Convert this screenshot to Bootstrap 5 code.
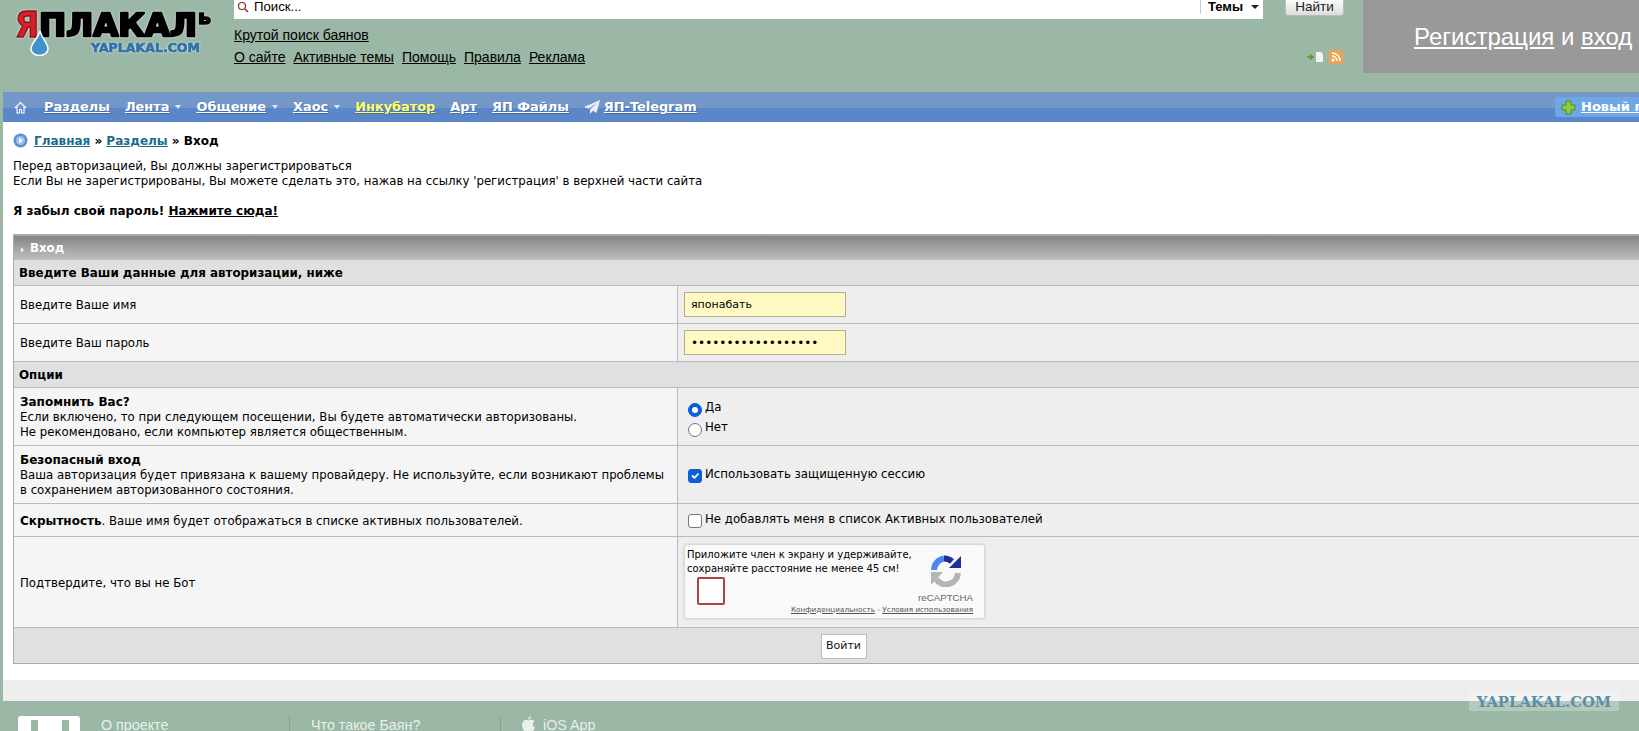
<!DOCTYPE html>
<html lang="ru">
<head>
    <meta charset="UTF-8">
    <meta name="viewport" content="width=device-width, initial-scale=1.0">
    <title>Вход</title>
    <link href="https://cdn.jsdelivr.net/npm/bootstrap@5.3.0/dist/css/bootstrap.min.css" rel="stylesheet">
    <style>
        html, body { height: 731px; overflow: hidden; background: #9bb7a5; }
        body { font-family: "DejaVu Sans", sans-serif; font-size: 11.75px; color: #000; }
        .yp-page { width: 1683px; position: relative; height: 731px; }
        a { color: inherit; }

        /* шапка */
        .yp-top { height: 92px; }
        .yp-logo { width: 234px; flex: none; }
        .yp-logo svg { display: block; }
        .yp-logo-t { filter: drop-shadow(0 0 1px #eee); }
        .yp-search-col { width: 1110px; flex: none; font-family: "Liberation Sans", sans-serif; font-size: 14px; }
        .yp-search { width: 1029px; height: 19px; background: #fff; padding-left: 2px; line-height: 13px; padding-bottom: 6px; }
        .yp-search-text { font-size: 13.2px; margin-left: 4px; }
        .yp-search-sel { width: 63px; height: 14px; border-left: 1px solid #ccc; margin-left: auto; padding-left: 7px; font-weight: bold; font-size: 13px; }
        .yp-caret { width: 0; height: 0; border-left: 4px solid transparent; border-right: 4px solid transparent; border-top: 4px solid #222; }
        .yp-find { width: 59px; height: 16px; margin-left: 22px; line-height: 9px; padding: 0 0 3px; border: 1px solid #bbb; border-top: 0; border-radius: 0 0 3px 3px; background: linear-gradient(#fafafa, #ddd); font-size: 13.5px; color: #222; }
        .yp-links-big { margin-top: 8px; line-height: 16px; }
        .yp-links { margin-top: 6px; line-height: 16px; gap: 8px; white-space: nowrap; }
        .yp-rss { margin-left: auto; padding-right: 1px; gap: 5px; }
        .yp-reg { width: 320px; height: 73px; margin-left: 19px; background: #999; color: #fff; font-family: "Liberation Sans", sans-serif; font-size: 24px; padding: 19px 0 0 51px; }

        /* меню */
        .yp-nav { height: 30px; margin-left: 3px; background: linear-gradient(#7497c9 0, #7497c9 16px, #5b87c8 16px); padding-left: 11px; font-weight: bold; font-size: 12.9px; color: #fff; gap: 15px; text-shadow: 1px 1px 0 rgba(30, 60, 110, .35); }
        .yp-nav a { color: #fff; }
        .yp-nav .yp-hot { color: #ffff66; }
        .yp-nav-first { margin-left: 2px; }
        .yp-nav-caret { display: inline-block; width: 0; height: 0; margin-left: 6px; vertical-align: 2px; border-left: 3.5px solid transparent; border-right: 3.5px solid transparent; border-top: 4px solid #dde6f4; }
        .yp-new { position: absolute; left: 1555px; top: 97px; width: 130px; height: 20px; border-radius: 3px 0 0 3px; background: #6ea6e6; padding-left: 6px; gap: 5px; color: #fff; font-weight: bold; font-size: 13px; white-space: nowrap; overflow: hidden; }

        /* контент */
        .yp-main { margin-left: 3px; height: 558px; background: #fff; padding: 0 10px; }
        .yp-crumbs { height: 37px; font-weight: bold; font-size: 12px; gap: 6px; }
        .yp-crumbs a { color: #1c6a8e; }
        .yp-intro { line-height: 15px; margin: 0; }
        .yp-forgot { margin: 15px 0 0; font-weight: bold; font-size: 12px; line-height: 15px; }
        .yp-form-wrap { margin-top: 15px; width: 1660px; }
        .yp-title { height: 26px; border: 1px solid #aaa; border-bottom: 0; border-top-width: 2px; background: linear-gradient(#858585, #bfbfbf); color: #fff; font-weight: bold; font-size: 11.8px; padding: 1px 0 0 7px; gap: 6px; }
        .yp-arrow { width: 0; height: 0; border-left: 3px solid #eee; border-top: 3px solid transparent; border-bottom: 3px solid transparent; margin-top: 2px; }
        .yp-form { width: 100%; margin: 0; table-layout: fixed; border-collapse: separate; border-spacing: 0; border-left: 1px solid #aaa; }
        .yp-form col.yp-col-l { width: 664px; }
        .yp-form td { padding: 0 6px; vertical-align: middle; border-bottom: 1px solid #bbb; line-height: 15px; }
        .yp-form td.yp-head { background: #e0e0e0; font-weight: bold; font-size: 11.9px; height: 26px; padding: 2px 0 0 5px; }
        .yp-form td.yp-l { background: #f5f5f5; border-right: 1px solid #bbb; padding-top: 2px; }
        .yp-form td.yp-l b { font-size: 12px; }
        .yp-form td.yp-r { background: #eee; }
        .yp-form td.yp-radios { padding-top: 4px; }
        .yp-inp { display: block; width: 162px; height: 25px; padding: 0 6px; border: 1px solid #b5ae8c; background: #fff9c4; font-family: "DejaVu Sans", sans-serif; font-size: 11px; }
        .yp-pass { font-size: 12px; letter-spacing: 0; }
        .yp-opt { gap: 3px; line-height: 15px; padding-left: 4px; }
        .yp-opt + .yp-opt { margin-top: 3px; }
        .yp-opt .form-check-input { width: 14px; height: 14px; margin: 2px 0 0; flex: none; border-color: #767676; }
        .yp-opt .form-check-input:checked { background-color: #0b5fd7; border-color: #0b5fd7; }
        .yp-opt .form-check-input[type=radio] { margin-top: 3px; }
        .yp-opt .form-check-input[type=checkbox] { border-radius: 3px; }

        /* капча */
        .yp-captcha-cell { padding-bottom: 2px !important; }
        .yp-captcha { width: 301px; height: 75px; position: relative; background: #f9f9f9; border: 1px solid #d8d8d8; border-radius: 3px; box-shadow: 0 0 3px rgba(0, 0, 0, .12); padding: 3px 2px; font-size: 10px; line-height: 14px; }
        .yp-cap-box { position: absolute; left: 12px; top: 32px; width: 28px; height: 28px; border: 2px solid #a9443f; border-radius: 2px; background: #fff; }
        .yp-cap-logo { position: absolute; left: 245px; top: 10px; }
        .yp-cap-name { position: absolute; right: 11px; top: 46px; font-family: "Liberation Sans", sans-serif; font-size: 9.7px; color: #666; }
        .yp-cap-links { position: absolute; right: 11px; top: 59px; font-size: 7.25px; line-height: 11px; color: #555; white-space: nowrap; }
        .yp-submit { background: #e0e0e0; text-align: center; height: 36px; border-bottom: 1px solid #aaa; border-left: 1px solid #aaa; padding-top: 6px; }
        .yp-btn { width: 46px; height: 25px; padding: 0; background: #fff; border: 1px solid #bbb; font-size: 11px; color: #111; }

        /* подвал */
        .yp-strip { height: 21px; margin-left: 3px; background: #eee; }
        .yp-foot { padding: 15px 0 0 18px; font-family: "Liberation Sans", sans-serif; font-size: 14.3px; color: #e9f0eb; line-height: 18px; }
        .yp-foot-logo { width: 62px; height: 30px; background: #fff; border-radius: 3px 3px 0 0; gap: 24px; padding: 4px 0 0 13px; }
        .yp-foot-logo i { display: block; width: 7px; height: 30px; background: #9bb7a5; }
        .yp-foot-item { width: 211px; height: 30px; padding-left: 21px; border-left: 1px solid #86a391; }
        .yp-foot-first { width: 209px; }
        .yp-mark { position: absolute; left: 1469px; top: 692px; width: 150px; height: 19px; background: rgba(255, 255, 255, .25); color: #5d8ea6; font-family: "DejaVu Serif", serif; font-weight: bold; font-size: 14.8px; line-height: 19px; text-align: center; }
    </style>
</head>
<body>
<div class="yp-page">
    <div class="yp-top d-flex">
        <div class="yp-logo">
            <svg width="234" height="70" viewBox="0 0 234 70">
                <g class="yp-logo-t" font-family="'DejaVu Sans'" font-weight="bold" stroke-linejoin="round">
                    <text x="15" y="37" font-size="35" fill="#d8202a" stroke="#8a1015" stroke-width="1.500" textLength="24" lengthAdjust="spacingAndGlyphs">Я</text>
                    <text x="39" y="36" font-size="32" fill="#000" stroke="#000" stroke-width="2.500" textLength="158" lengthAdjust="spacingAndGlyphs">ПЛАКАЛ</text>
                    <text x="198" y="24" font-size="19" fill="#000" stroke="#000" stroke-width="1.500" textLength="13" lengthAdjust="spacingAndGlyphs">ь</text>
                    <text x="91" y="51.500" font-size="12" fill="#2f73aa" stroke="#2f73aa" stroke-width=".7" textLength="109" lengthAdjust="spacingAndGlyphs">YAPLAKAL.COM</text>
                </g>
                <path d="M40 31c2 8 8 12 8 18a8.500 6.500 0 0 1-17 0c0-6 7-10 9-18z" fill="#3f93c9" stroke="#fff" stroke-width="1.500"/>
            </svg>
        </div>
        <div class="yp-search-col">
            <div class="d-flex">
                <div class="yp-search d-flex align-items-center">
                    <svg width="14" height="14" viewBox="0 0 14 14"><circle cx="6" cy="6" r="3.500" fill="none" stroke="#8a2a2a" stroke-width="1.200"/><path d="M9 9l3 3" stroke="#8a2a2a" stroke-width="1.500"/></svg>
                    <span class="yp-search-text">Поиск...</span>
                    <div class="yp-search-sel d-flex align-items-center gap-2">Темы <span class="yp-caret"></span></div>
                </div>
                <button type="button" class="yp-find">Найти</button>
            </div>
            <div class="yp-links-big"><a href="#">Крутой поиск баянов</a></div>
            <div class="yp-links d-flex">
                <a href="#">О сайте</a><a href="#">Активные темы</a><a href="#">Помощь</a><a href="#">Правила</a><a href="#">Реклама</a>
                <div class="yp-rss d-flex align-items-center">
                    <svg width="17" height="10" viewBox="0 0 17 10"><path d="M0 5h5M3 2.500 6 5 3 7.500" fill="none" stroke="#5a9a1e" stroke-width="1.500"/><path d="M9 0h5l2 2v8H9z" fill="#f2f4f2"/></svg>
                    <svg width="14" height="14" viewBox="0 0 14 14"><rect width="14" height="14" rx="2" fill="#f0a052"/><circle cx="4" cy="10" r="1.500" fill="#fff"/><path d="M3 6a5 5 0 0 1 5 5M3 3a8 8 0 0 1 8 8" fill="none" stroke="#fff" stroke-width="1.500"/></svg>
                </div>
            </div>
        </div>
        <div class="yp-reg"><a href="#">Регистрация</a> и <a href="#">вход</a></div>
    </div>

    <div class="yp-nav d-flex align-items-center">
        <svg width="13" height="13" viewBox="0 0 13 13"><path d="M1 7l5.500-5.500L12 7M3 6v6h2.500V8.500h2V12H10V6" fill="none" stroke="#fff" stroke-width="1.100"/></svg>
        <a href="#" class="yp-nav-first">Разделы</a>
        <span><a href="#">Лента</a><span class="yp-nav-caret"></span></span>
        <span><a href="#">Общение</a><span class="yp-nav-caret"></span></span>
        <span><a href="#">Хаос</a><span class="yp-nav-caret"></span></span>
        <a href="#" class="yp-hot">Инкубатор</a>
        <a href="#">Арт</a>
        <a href="#">ЯП Файлы</a>
        <span class="d-flex align-items-center gap-1">
            <svg width="16" height="14" viewBox="0 0 16 14"><path d="M16 0 0 7l4.500 1.800L13 3 6 9.500V14l2.800-3.200 3.700 2.200z" fill="#e8eef8"/></svg>
            <a href="#">ЯП-Telegram</a>
        </span>
    </div>
    <div class="yp-new d-flex align-items-center">
        <svg width="15" height="15" viewBox="0 0 15 15"><path d="M5 1h5v4h4v5h-4v4H5v-4H1V5h4z" fill="#8ccb3c" stroke="#4f8a1c"/></svg>
        <a href="#">Новый пост</a>
    </div>

    <div class="yp-main">
        <div class="yp-crumbs d-flex align-items-center">
            <svg width="15" height="15" viewBox="0 0 15 15"><circle cx="7.500" cy="7.500" r="7" fill="#5a8fd6"/><circle cx="7.500" cy="7.500" r="4.500" fill="#9cc0ee"/><path d="M6 4.500 10 7.500 6 10.500z" fill="#fff"/></svg>
            <span><a href="#">Главная</a> » <a href="#">Разделы</a> » Вход</span>
        </div>
        <p class="yp-intro">Перед авторизацией, Вы должны зарегистрироваться<br>Если Вы не зарегистрированы, Вы можете сделать это, нажав на ссылку 'регистрация' в верхней части сайта</p>
        <p class="yp-forgot">Я забыл свой пароль! <a href="#">Нажмите сюда!</a></p>

        <div class="yp-form-wrap">
            <div class="yp-title d-flex align-items-center"><span class="yp-arrow"></span>Вход</div>
            <table class="yp-form">
                <colgroup><col class="yp-col-l"><col></colgroup>
                <tr><td colspan="2" class="yp-head">Введите Ваши данные для авторизации, ниже</td></tr>
                <tr style="height:38px">
                    <td class="yp-l">Введите Ваше имя</td>
                    <td class="yp-r"><input class="yp-inp" type="text" value="японабать"></td>
                </tr>
                <tr style="height:38px">
                    <td class="yp-l">Введите Ваш пароль</td>
                    <td class="yp-r"><input class="yp-inp yp-pass" type="password" value="123456789012345678"></td>
                </tr>
                <tr><td colspan="2" class="yp-head">Опции</td></tr>
                <tr style="height:58px">
                    <td class="yp-l"><b>Запомнить Вас?</b><br>Если включено, то при следующем посещении, Вы будете автоматически авторизованы.<br>Не рекомендовано, если компьютер является общественным.</td>
                    <td class="yp-r yp-radios">
                        <div class="yp-opt d-flex"><input class="form-check-input" type="radio" name="remember" checked>Да</div>
                        <div class="yp-opt d-flex"><input class="form-check-input" type="radio" name="remember">Нет</div>
                    </td>
                </tr>
                <tr style="height:58px">
                    <td class="yp-l"><b>Безопасный вход</b><br>Ваша авторизация будет привязана к вашему провайдеру. Не используйте, если возникают проблемы в сохранением авторизованного состояния.</td>
                    <td class="yp-r"><div class="yp-opt d-flex"><input class="form-check-input" type="checkbox" checked>Использовать защищенную сессию</div></td>
                </tr>
                <tr style="height:33px">
                    <td class="yp-l"><b>Скрытность</b>. Ваше имя будет отображаться в списке активных пользователей.</td>
                    <td class="yp-r"><div class="yp-opt d-flex"><input class="form-check-input" type="checkbox">Не добавлять меня в список Активных пользователей</div></td>
                </tr>
                <tr style="height:91px">
                    <td class="yp-l">Подтвердите, что вы не Бот</td>
                    <td class="yp-r yp-captcha-cell">
                        <div class="yp-captcha">
                            Приложите член к экрану и удерживайте,<br>сохраняйте расстояние не менее 45 см!
                            <div class="yp-cap-box"></div>
                            <svg class="yp-cap-logo" width="32" height="32" viewBox="0 0 32 32">
                                <path d="M4 15A12 12 0 0 1 14 3.500" fill="none" stroke="#4a88f0" stroke-width="6"/>
                                <path d="M14 3.500a12 12 0 0 1 8 3" fill="none" stroke="#1e2e9c" stroke-width="6"/>
                                <path d="M19 13 31 1v12z" fill="#1e2e9c"/>
                                <path d="M28 18a12 12 0 0 1-22 6" fill="none" stroke="#b5b5b5" stroke-width="6"/>
                                <path d="M1 17h12L1 30z" fill="#b5b5b5"/>
                            </svg>
                            <div class="yp-cap-name">reCAPTCHA</div>
                            <div class="yp-cap-links"><a href="#">Конфиденциальность</a> - <a href="#">Условия использования</a></div>
                        </div>
                    </td>
                </tr>
            </table>
            <div class="yp-submit"><button type="button" class="yp-btn">Войти</button></div>
        </div>
    </div>
    <div class="yp-strip"></div>

    <div class="yp-foot d-flex">
        <div class="yp-foot-logo d-flex"><i></i><i></i></div>
        <div class="yp-foot-item yp-foot-first border-0">О проекте</div>
        <div class="yp-foot-item">Что такое Баян?</div>
        <div class="yp-foot-item d-flex gap-2">
            <svg width="13" height="16" viewBox="0 0 13 16"><path d="M9 0c0 2-1.500 3.500-3 3.500C6 2 7.500.3 9 0zM6.500 4.500c1 0 1.800-.7 3-.7 1.300 0 2.300.7 3 1.700-2.500 1.500-2 5 .5 6-.8 2-2.200 4.500-3.500 4.500-1 0-1.500-.7-2.800-.7s-1.800.7-2.800.7C2 16 0 12 0 9c0-3.200 2-5.200 4-5.200 1 0 1.800.7 2.500.7z" fill="#e9f0eb"/></svg>
            iOS App
        </div>
    </div>
    <div class="yp-mark">YAPLAKAL.COM</div>
</div>
<script src="https://cdn.jsdelivr.net/npm/bootstrap@5.3.0/dist/js/bootstrap.bundle.min.js"></script>
</body>
</html>
